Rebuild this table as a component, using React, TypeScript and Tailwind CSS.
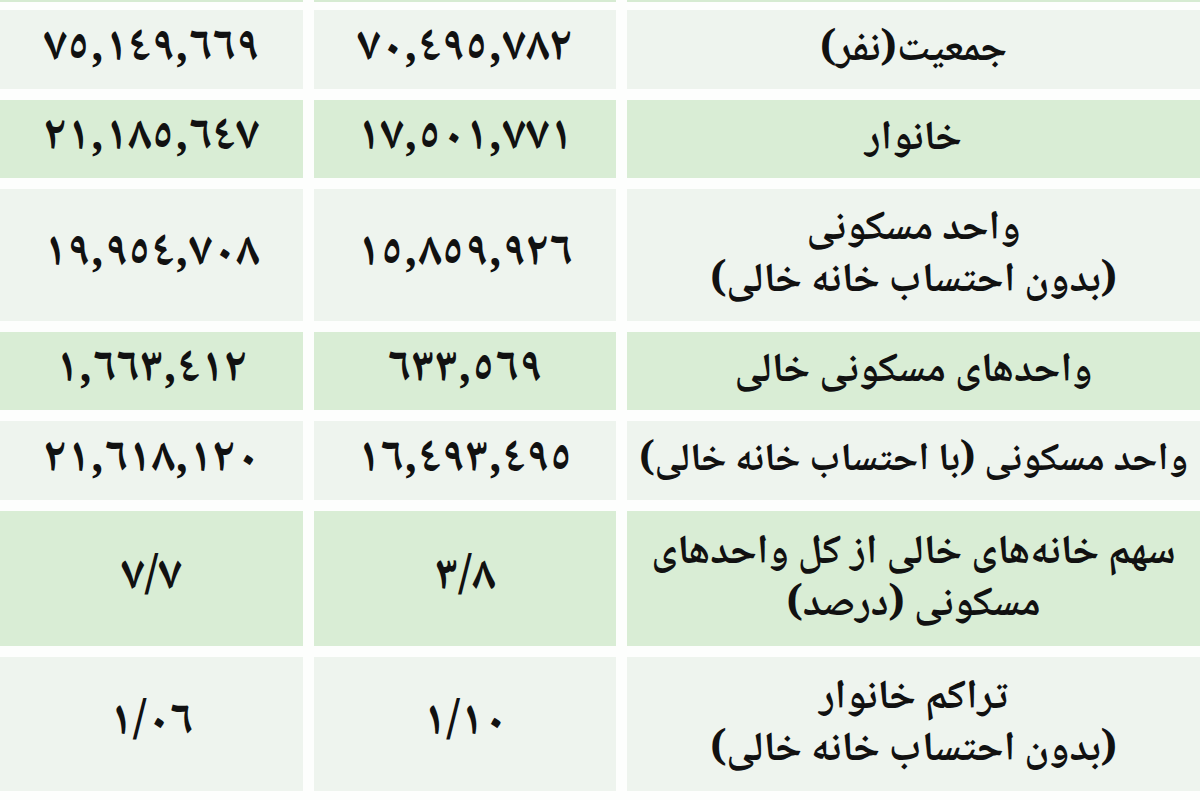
import React from "react";

type Row = { h: string; green: boolean; left: string; mid: string; label: string[]; small?: boolean };

const rows: Row[] = [
  { h: "h-[79px]", green: false, left: "٧٥,١٤٩,٦٦٩", mid: "٧٠,٤٩٥,٧٨٢", label: ["جمعیت(نفر)"] },
  { h: "h-[78px]", green: true, left: "٢١,١٨٥,٦٤٧", mid: "١٧,٥٠١,٧٧١", label: ["خانوار"] },
  { h: "h-[132px]", green: false, left: "١٩,٩٥٤,٧٠٨", mid: "١٥,٨٥٩,٩٢٦", label: ["واحد مسکونی", "(بدون احتساب خانه خالی)"] },
  { h: "h-[78px]", green: true, left: "١,٦٦٣,٤١٢", mid: "٦٣٣,٥٦٩", label: ["واحدهای مسکونی خالی"] },
  { h: "h-[79px]", green: false, left: "٢١,٦١٨,١٢٠", mid: "١٦,٤٩٣,٤٩٥", label: ["واحد مسکونی (با احتساب خانه خالی)"], small: true },
  { h: "h-[135px]", green: true, left: "٧/٧", mid: "٣/٨", label: ["سهم خانه‌های خالی از کل واحدهای", "مسکونی (درصد)"] },
  { h: "h-[134px]", green: false, left: "١/٠٦", mid: "١/١٠", label: ["تراکم خانوار", "(بدون احتساب خانه خالی)"] },
];

const font = { fontFamily: '"Noto Naskh Arabic", "Noto Sans Arabic", "DejaVu Sans", sans-serif' };

export default function App() {
  return (
    <div className="w-[1200px] h-[800px] bg-[#fdfefd] overflow-hidden flex flex-col text-[#111]" style={font}>
      <div className="grid grid-cols-[303px_302px_573px] gap-x-[11px] h-[2px]">
        <div className="bg-[#d6ebd2]" />
        <div className="bg-[#d6ebd2]" />
        <div className="bg-[#d6ebd2]" />
      </div>
      <div className="mt-[8px] flex flex-col gap-[11px]">
        {rows.map((r, i) => {
          const bg = r.green ? "bg-[#d9edd5]" : "bg-[#eef4ee]";
          return (
            <div key={i} className={`grid grid-cols-[303px_302px_573px] gap-x-[11px] ${r.h}`}>
              <div className={`${bg} flex items-center justify-center`}>
                <span dir="ltr" className="text-[48px] font-bold leading-none tracking-[4px]">{r.left}</span>
              </div>
              <div className={`${bg} flex items-center justify-center`}>
                <span dir="ltr" className="text-[48px] font-bold leading-none tracking-[4px]">{r.mid}</span>
              </div>
              <div className={`${bg} flex flex-col items-center justify-center overflow-hidden pt-[2px]`} dir="rtl">
                {r.label.map((l, j) => (
                  <div
                    key={j}
                    className={`${r.small ? "text-[39px]" : "text-[41px]"} font-bold leading-[52px] whitespace-nowrap`}
                  >
                    {l}
                  </div>
                ))}
              </div>
            </div>
          );
        })}
      </div>
    </div>
  );
}
